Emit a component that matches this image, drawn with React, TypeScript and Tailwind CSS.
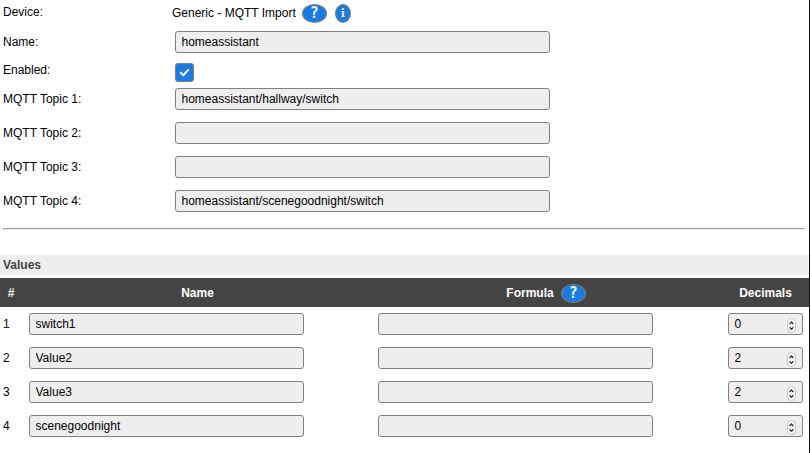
import type { ReactNode } from "react";

const topics = ["homeassistant/hallway/switch", "", "", "homeassistant/scenegoodnight/switch"];

const values = [
  { name: "switch1", decimals: 0 },
  { name: "Value2", decimals: 2 },
  { name: "Value3", decimals: 2 },
  { name: "scenegoodnight", decimals: 0 },
];

const field =
  "block h-[22px] rounded-[3px] border border-[#808080] bg-[#eeeeee] pl-[5.5px] pb-px text-[12px] leading-[20px] text-black outline-none";

function Row({ label, children }: { label: string; children: ReactNode }) {
  return (
    <div className="flex h-[34px] items-center">
      <span className="w-[172px]">{label}</span>
      {children}
    </div>
  );
}

function Help() {
  return (
    <button className="flex h-[19px] w-[25px] justify-center rounded-[50%] border border-[#808080] bg-[#1b7be0] font-['DejaVu_Sans_Mono',monospace] text-[15px] leading-[16px] font-bold text-[#eeeeee]">
      ?
    </button>
  );
}

function Stepper() {
  return (
    <svg width="9" height="15" viewBox="0 0 9 15" className="mt-[4px]">
      <rect x="0.5" y="0.5" width="8" height="14" rx="4" fill="#fff" stroke="#c2c2c2" />
      <path d="M2.6 5.9 4.5 4l1.9 1.9M2.6 9.3 4.5 11.2l1.9-1.9" fill="none" stroke="#333" strokeWidth="1.4" />
    </svg>
  );
}

export default function App() {
  return (
    <div className="h-[453px] w-[810px] overflow-hidden border-r border-[#101417] bg-white font-['Liberation_Sans',Arial,sans-serif] text-[12px] leading-[14px] text-black">
      <div className="h-[218px] pl-[3px]">
        <div className="flex h-[25px] items-start">
          <span className="w-[169px] pt-[5px]">Device:</span>
          <span className="pt-[6px]">Generic - MQTT Import</span>
          <div className="mt-[4px] ml-[6px]">
            <Help />
          </div>
          <button className="mt-[4px] ml-[8px] flex h-[19px] w-[16px] justify-center rounded-[50%] border border-[#808080] bg-[#1b7be0]">
            <span className="font-['DejaVu_Serif',serif] text-[11px] leading-[17px] font-bold text-[#eeeeee]">i</span>
          </button>
        </div>
        <Row label="Name:">
          <input className={`${field} w-[375px]`} defaultValue="homeassistant" />
        </Row>
        <div className="flex h-[23px] items-start">
          <span className="w-[172px] pt-[4px]">Enabled:</span>
          <div className="mt-[4px] flex size-[19px] items-center justify-center rounded-[3px] border border-[#808080] bg-[#1b7be0]">
            <svg width="11" height="9" viewBox="0 0 11 9">
              <path d="M1.2 4.2 4.3 7.2 9.7 1.6" fill="none" stroke="#eee" strokeWidth="2.2" />
            </svg>
          </div>
        </div>
        {topics.map((topic, i) => (
          <Row key={i} label={`MQTT Topic ${i + 1}:`}>
            <input className={`${field} w-[375px]`} defaultValue={topic} />
          </Row>
        ))}
      </div>
      <hr className="mt-[10px] mr-[4px] ml-[3px] h-[2px] border border-t-[#959595] border-r-[#eeeeee] border-b-[#eeeeee] border-l-[#959595]" />
      <h2 className="mt-[25px] h-[20px] bg-[#eeeeee] pl-[3px] text-[12px] leading-[20px] font-bold text-[#444444]">Values</h2>
      <div className="mt-[3px] flex h-[29px] items-center bg-[#444444] font-bold text-white">
        <span className="w-[22px] text-center">#</span>
        <span className="w-[351px] text-center">Name</span>
        <div className="flex w-[346px] items-center justify-center gap-[7px]">
          <span>Formula</span>
          <div className="mt-px">
            <Help />
          </div>
        </div>
        <span className="w-[90px] pl-[3px] text-center">Decimals</span>
      </div>
      <div>
        {values.map((v, i) => (
          <div key={i} className="flex h-[34px] items-center pl-[3px]">
            <span className="w-[26px]">{i + 1}</span>
            <input className={`${field} w-[275px]`} defaultValue={v.name} />
            <input className={`${field} ml-[74px] w-[275px]`} />
            <div className={`${field} ml-[75px] flex! w-[75px] justify-between pr-[6px]`}>
              <span>{v.decimals}</span>
              <Stepper />
            </div>
          </div>
        ))}
      </div>
    </div>
  );
}
